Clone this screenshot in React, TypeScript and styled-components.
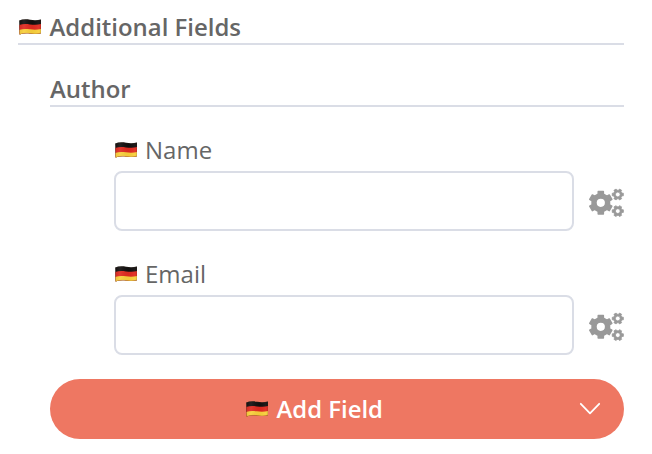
import React, { useId } from "react";
import styled, { createGlobalStyle } from "styled-components";

const GlobalStyle = createGlobalStyle`
  * { box-sizing: border-box; }
  body {
    margin: 0;
    background: #fff;
    color: #666;
    font-family: "Open Sans", "Noto Sans", sans-serif;
    font-size: 24px;
    line-height: 32px;
    -webkit-font-smoothing: antialiased;
  }
`;

const Form = styled.main`
  width: 652px;
  height: 454px;
  padding: 11px 28px 0 18px;
`;

const Heading = styled.h2`
  display: flex;
  align-items: center;
  height: 34px;
  margin: 0;
  border-bottom: 2px solid #dadde6;
  font-size: 23.95px;
  font-weight: 600;
`;

const Group = styled.section`
  margin: 28px 0 0 32px;
`;

const Field = styled.div`
  margin-left: 64px;
  padding-top: 27px;
`;

const Label = styled.label`
  display: flex;
  align-items: center;
  height: 32px;
  margin-bottom: 5px;
`;

const InputRow = styled.div`
  display: flex;
  align-items: center;
  justify-content: space-between;
`;

const TextInput = styled.input`
  width: 460px;
  height: 60px;
  padding: 0 16px;
  border: 2px solid #dadde6;
  border-radius: 8px;
  background: #fff;
  font: inherit;
  color: inherit;
  outline: none;
`;

const SettingsButton = styled.button`
  display: flex;
  margin-top: 4px;
  padding: 0;
  border: 0;
  background: none;
  color: #999;

  svg {
    width: 36px;
    height: 30px;
  }
`;

const AddButton = styled.button`
  display: flex;
  align-items: center;
  width: 100%;
  height: 60px;
  margin-top: 24px;
  padding: 0 23px 0 0;
  border: 0;
  border-radius: 30px;
  background: #ee7762;
  color: #fff;
  font: inherit;
  font-size: 23.9px;
  font-weight: 600;
`;

const AddLabel = styled.span`
  display: flex;
  flex: 1;
  align-items: center;
  padding-left: 195px;
`;

const FlagSvg = styled.svg<{ $gap: number }>`
  flex: none;
  width: 24px;
  height: 20px;
  margin-right: ${(p) => p.$gap}px;
`;

const WAVE = "M1.2 3.5C4.5 2.2 8 2.1 12 2.8S19.5 3.4 23 2.5V16.2C19.5 17.1 16 17.1 12 16.6S4.5 16.4 1.6 17.5Z";

function Flag({ gap = 7 }: { gap?: number }) {
  const id = useId();
  return (
    <FlagSvg $gap={gap} viewBox="0 0 24 20" aria-hidden="true">
      <defs>
        <clipPath id={id + "c"}>
          <path d={WAVE} />
        </clipPath>
        <linearGradient id={id + "g"}>
          <stop offset="0" stopColor="#000" stopOpacity=".06" />
          <stop offset=".25" stopColor="#fff" stopOpacity=".08" />
          <stop offset=".6" stopColor="#000" stopOpacity=".03" />
          <stop offset=".85" stopColor="#fff" stopOpacity=".05" />
          <stop offset="1" stopColor="#000" stopOpacity=".08" />
        </linearGradient>
      </defs>
      <g clipPath={`url(#${id}c)`}>
        <rect width="24" height="20" fill="#120f0f" />
        <path d="M1 8.1C4.5 6.9 8 6.9 12 7.4S19.5 8 23 7.1V20H1Z" fill="#e02a20" />
        <path d="M1 13C4.5 11.7 8 11.7 12 12.3S19.5 12.8 23 12V20H1Z" fill="#f8cf3b" />
        <rect width="24" height="20" fill={`url(#${id}g)`} />
        <path d={WAVE} fill="none" stroke="#5a4530" strokeOpacity=".3" strokeWidth=".8" />
      </g>
    </FlagSvg>
  );
}

/* Outline of a six-toothed gear with a round hole, starting at the given angle. */
function gearPath(cx: number, cy: number, outer: number, root: number, hole: number, start: number) {
  const points: string[] = [];
  for (let i = 0; i < 6; i++) {
    const steps: [number, number][] = [
      [-17, root],
      [-13, outer],
      [13, outer],
      [17, root],
    ];
    for (const [offset, radius] of steps) {
      const angle = ((start + i * 60 + offset) * Math.PI) / 180;
      points.push(`${(cx + radius * Math.cos(angle)).toFixed(2)} ${(cy + radius * Math.sin(angle)).toFixed(2)}`);
    }
  }
  return (
    `M${points.join("L")}Z` +
    `M${cx - hole} ${cy}a${hole} ${hole} 0 1 0 ${hole * 2} 0a${hole} ${hole} 0 1 0 ${-hole * 2} 0Z`
  );
}

function Gears() {
  return (
    <svg viewBox="0 0 36 30" fill="currentColor" stroke="currentColor" strokeLinejoin="round" aria-hidden="true">
      <path d={gearPath(12.8, 14.8, 11.6, 9, 4.8, 90)} fillRule="evenodd" strokeWidth="1.4" />
      <path d={gearPath(29.8, 6.5, 5.7, 4.4, 2.4, 0)} fillRule="evenodd" strokeWidth=".8" />
      <path d={gearPath(29.8, 23.1, 5.7, 4.4, 2.4, 0)} fillRule="evenodd" strokeWidth=".8" />
    </svg>
  );
}

function TextField({ name }: { name: string }) {
  return (
    <Field>
      <Label htmlFor={name}>
        <Flag />
        {name}
      </Label>
      <InputRow>
        <TextInput id={name} />
        <SettingsButton aria-label={`${name} settings`}>
          <Gears />
        </SettingsButton>
      </InputRow>
    </Field>
  );
}

export default function App() {
  return (
    <>
      <GlobalStyle />
      <Form>
        <Heading>
          <Flag gap={7.5} />
          Additional Fields
        </Heading>
        <Group>
          <Heading as="h3">Author</Heading>
          <TextField name="Name" />
          <TextField name="Email" />
          <AddButton>
            <AddLabel>
              <Flag gap={7.5} />
              Add Field
            </AddLabel>
            <svg width="22" height="14" viewBox="0 0 22 14" aria-hidden="true">
              <path
                d="M1.8 1.8 11 11.3 20.2 1.8"
                fill="none"
                stroke="#fff"
                strokeWidth="1.8"
                strokeLinecap="round"
                strokeLinejoin="round"
              />
            </svg>
          </AddButton>
        </Group>
      </Form>
    </>
  );
}
